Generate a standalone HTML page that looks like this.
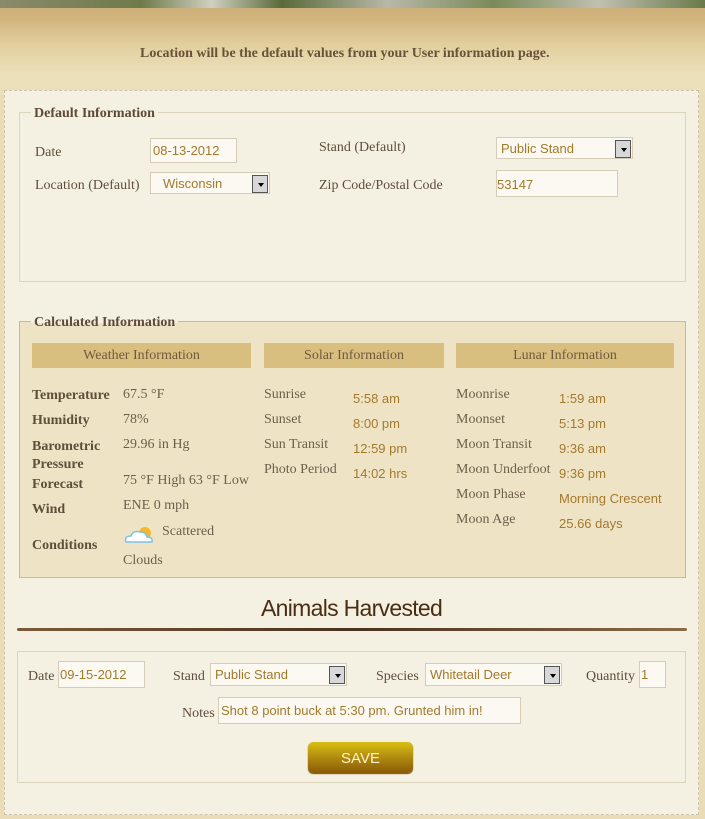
<!DOCTYPE html>
<html><head><meta charset="utf-8"><style>
*{margin:0;padding:0;box-sizing:border-box}
body{width:705px;height:819px;overflow:hidden;position:relative;font-family:"Liberation Serif",serif;font-size:14px;color:#5e4e3c;background:#e9dcb6}
.a{position:absolute;white-space:nowrap}
.t{transform:translateY(2px)}
.top{position:absolute;left:0;top:0;width:705px;height:95px;background:linear-gradient(#c9ad75 0,#d2b57e 20px,#e2cf9f 45px,#ece0bb 75px,#ebdfba 95px)}
.photo{position:absolute;left:0;top:0;width:705px;height:8px;background:linear-gradient(90deg,#8a8a6a,#6f7a4a 20%,#cfd0c0 30%,#5a6a3a 40%,#b8b8a8 55%,#7a8a5a 70%,#c0c0b0 85%,#6a7a4a)}
.panel{position:absolute;left:4px;top:90px;width:695px;height:725px;background:#f4f0e2;border:1px dashed #cfc4a8}
.fs{position:absolute;border:1px solid #ddd4bc}
.leg{position:absolute;background:#f4f0e2;font-weight:bold;font-size:14px;padding:0 3px;color:#5e4a36;transform:translateY(2px)}
.inp{position:absolute;background:#fbf9f2;border:1px solid #d6cdb8;color:#a37a2c;font-family:"Liberation Sans",sans-serif;font-size:13px;padding:4px 2px}
.sel::after{content:"";position:absolute;right:1px;top:2px;width:14px;height:16px;background:#d8d8d8;border:1px solid #555}
.arr{position:absolute;right:5px;top:10px;border:3px solid transparent;border-top:4px solid #000;z-index:2}
.hb{position:absolute;top:343px;height:25px;background:#d9bf7f;color:#6e5a3e;text-align:center;line-height:26px;font-size:14px}
.b{font-weight:bold}
.v{color:#a37a2c;font-family:"Liberation Sans",sans-serif;font-size:13px}
.vs{color:#6e5e4a}
</style></head><body>
<div class="top"></div><div class="photo"></div>
<div class="a b t" style="left:140px;top:44px;font-size:14px;color:#6a5238">Location will be the default values from your User information page.</div>
<div class="panel"></div>

<div class="fs" style="left:19px;top:112px;width:667px;height:170px"></div>
<div class="leg" style="left:31px;top:104px">Default Information</div>
<div class="a t" style="left:35px;top:143px">Date</div>
<div class="inp" style="left:150px;top:138px;width:87px;height:25px">08-13-2012</div>
<div class="a t" style="left:35px;top:176px">Location (Default)</div>
<div class="inp sel" style="left:150px;top:172px;width:120px;height:22px;padding:3px 12px">Wisconsin<span class="arr"></span></div>
<div class="a t" style="left:319px;top:138px">Stand (Default)</div>
<div class="inp sel" style="left:496px;top:137px;width:137px;height:22px;padding:3px 4px">Public Stand<span class="arr"></span></div>
<div class="a t" style="left:319px;top:176px">Zip Code/Postal Code</div>
<div class="inp" style="left:496px;top:170px;width:122px;height:27px;padding:6px 0">53147</div>

<div class="fs" style="left:19px;top:321px;width:667px;height:257px;background:#efe3c6;border-color:#cdb990"></div>
<div class="leg" style="left:31px;top:313px;background:linear-gradient(#f4f0e2 50%,#efe3c6 50%)">Calculated Information</div>
<div class="hb" style="left:32px;width:219px">Weather Information</div>
<div class="hb" style="left:264px;width:180px">Solar Information</div>
<div class="hb" style="left:456px;width:218px">Lunar Information</div>

<div class="a b t" style="left:32px;top:386px">Temperature</div><div class="a vs t" style="left:123px;top:385px">67.5 °F</div>
<div class="a b t" style="left:32px;top:411px">Humidity</div><div class="a vs t" style="left:123px;top:410px">78%</div>
<div class="a b t" style="left:32px;top:436px;line-height:18px">Barometric<br>Pressure</div><div class="a vs t" style="left:123px;top:435px">29.96 in Hg</div>
<div class="a b t" style="left:32px;top:475px">Forecast</div><div class="a vs t" style="left:123px;top:471px">75 °F High 63 °F Low</div>
<div class="a b t" style="left:32px;top:500px">Wind</div><div class="a vs t" style="left:123px;top:496px">ENE 0 mph</div>
<div class="a b t" style="left:32px;top:536px">Conditions</div>
<svg class="a" style="left:123px;top:523px" width="32" height="22" viewBox="0 0 32 22"><circle cx="22" cy="10" r="6" fill="#f5b82a"/><path d="M3 19 Q1 13 8 13 Q10 7 17 9 Q23 9 24 14 Q30 14 29 19 Z" fill="#fff" stroke="#7ec0e8" stroke-width="1.5"/></svg>
<div class="a vs t" style="left:162px;top:522px">Scattered</div>
<div class="a vs t" style="left:123px;top:551px">Clouds</div>

<div class="a vs t" style="left:264px;top:385px">Sunrise</div><div class="a v t" style="left:353px;top:389px">5:58 am</div>
<div class="a vs t" style="left:264px;top:410px">Sunset</div><div class="a v t" style="left:353px;top:414px">8:00 pm</div>
<div class="a vs t" style="left:264px;top:435px">Sun Transit</div><div class="a v t" style="left:353px;top:439px">12:59 pm</div>
<div class="a vs t" style="left:264px;top:460px">Photo Period</div><div class="a v t" style="left:353px;top:464px">14:02 hrs</div>

<div class="a vs t" style="left:456px;top:385px">Moonrise</div><div class="a v t" style="left:559px;top:389px">1:59 am</div>
<div class="a vs t" style="left:456px;top:410px">Moonset</div><div class="a v t" style="left:559px;top:414px">5:13 pm</div>
<div class="a vs t" style="left:456px;top:435px">Moon Transit</div><div class="a v t" style="left:559px;top:439px">9:36 am</div>
<div class="a vs t" style="left:456px;top:460px">Moon Underfoot</div><div class="a v t" style="left:559px;top:464px">9:36 pm</div>
<div class="a vs t" style="left:456px;top:485px">Moon Phase</div><div class="a v t" style="left:559px;top:489px">Morning Crescent</div>
<div class="a vs t" style="left:456px;top:510px">Moon Age</div><div class="a v t" style="left:559px;top:514px">25.66 days</div>

<div class="a" style="left:261px;top:595px;font-family:'Liberation Sans',sans-serif;font-size:23px;color:#4a2e14;letter-spacing:-0.7px">Animals Harvested</div>
<div class="a" style="left:17px;top:628px;width:670px;height:3px;background:linear-gradient(90deg,#7a5a3a,#4a3220 50%,#8a6a4a);border-radius:2px"></div>

<div class="fs" style="left:17px;top:651px;width:669px;height:132px"></div>
<div class="a t" style="left:28px;top:667px">Date</div>
<div class="inp" style="left:58px;top:661px;width:87px;height:27px;padding:5px 1px">09-15-2012</div>
<div class="a t" style="left:173px;top:667px">Stand</div>
<div class="inp sel" style="left:210px;top:663px;width:137px;height:23px;padding:3px 4px">Public Stand<span class="arr"></span></div>
<div class="a t" style="left:376px;top:667px">Species</div>
<div class="inp sel" style="left:425px;top:663px;width:137px;height:23px;padding:3px 4px">Whitetail Deer<span class="arr"></span></div>
<div class="a t" style="left:586px;top:667px">Quantity</div>
<div class="inp" style="left:639px;top:661px;width:27px;height:27px;padding:5px 1px">1</div>
<div class="a t" style="left:182px;top:704px">Notes</div>
<div class="inp" style="left:218px;top:697px;width:303px;height:27px;padding:5px 2px">Shot 8 point buck at 5:30 pm. Grunted him in!</div>
<div class="a" style="left:308px;top:742px;width:105px;height:31px;border-radius:5px;background:linear-gradient(#d8c010,#b08a10 50%,#8a5a08);color:#fff3c8;font-family:'Liberation Sans',sans-serif;font-size:15px;text-align:center;line-height:33px;box-shadow:0 1px 1px #6a4a10">SAVE</div>
</body></html>
